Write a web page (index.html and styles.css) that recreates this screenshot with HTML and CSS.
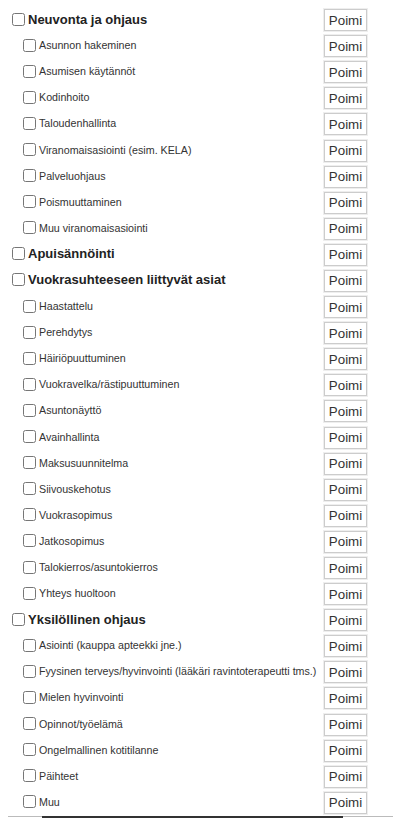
FILE: index.html
```html
<!DOCTYPE html>
<html lang="fi">
<head>
    <meta charset="UTF-8">
    <meta name="viewport" content="width=device-width, initial-scale=1.0">
    <title>Toimenpiteet</title>
    <link rel="stylesheet" href="styles.css">
</head>
<body>
    <div class="lista">
        <div class="rivi paa"><label><input type="checkbox">Neuvonta ja ohjaus</label><button>Poimi</button></div>
        <div class="rivi ala"><label><input type="checkbox">Asunnon hakeminen</label><button>Poimi</button></div>
        <div class="rivi ala"><label><input type="checkbox">Asumisen käytännöt</label><button>Poimi</button></div>
        <div class="rivi ala"><label><input type="checkbox">Kodinhoito</label><button>Poimi</button></div>
        <div class="rivi ala"><label><input type="checkbox">Taloudenhallinta</label><button>Poimi</button></div>
        <div class="rivi ala"><label><input type="checkbox">Viranomaisasiointi (esim. KELA)</label><button>Poimi</button></div>
        <div class="rivi ala"><label><input type="checkbox">Palveluohjaus</label><button>Poimi</button></div>
        <div class="rivi ala"><label><input type="checkbox">Poismuuttaminen</label><button>Poimi</button></div>
        <div class="rivi ala"><label><input type="checkbox">Muu viranomaisasiointi</label><button>Poimi</button></div>
        <div class="rivi paa"><label><input type="checkbox">Apuisännöinti</label><button>Poimi</button></div>
        <div class="rivi paa"><label><input type="checkbox">Vuokrasuhteeseen liittyvät asiat</label><button>Poimi</button></div>
        <div class="rivi ala"><label><input type="checkbox">Haastattelu</label><button>Poimi</button></div>
        <div class="rivi ala"><label><input type="checkbox">Perehdytys</label><button>Poimi</button></div>
        <div class="rivi ala"><label><input type="checkbox">Häiriöpuuttuminen</label><button>Poimi</button></div>
        <div class="rivi ala"><label><input type="checkbox">Vuokravelka/rästipuuttuminen</label><button>Poimi</button></div>
        <div class="rivi ala"><label><input type="checkbox">Asuntonäyttö</label><button>Poimi</button></div>
        <div class="rivi ala"><label><input type="checkbox">Avainhallinta</label><button>Poimi</button></div>
        <div class="rivi ala"><label><input type="checkbox">Maksusuunnitelma</label><button>Poimi</button></div>
        <div class="rivi ala"><label><input type="checkbox">Siivouskehotus</label><button>Poimi</button></div>
        <div class="rivi ala"><label><input type="checkbox">Vuokrasopimus</label><button>Poimi</button></div>
        <div class="rivi ala"><label><input type="checkbox">Jatkosopimus</label><button>Poimi</button></div>
        <div class="rivi ala"><label><input type="checkbox">Talokierros/asuntokierros</label><button>Poimi</button></div>
        <div class="rivi ala"><label><input type="checkbox">Yhteys huoltoon</label><button>Poimi</button></div>
        <div class="rivi paa"><label><input type="checkbox">Yksilöllinen ohjaus</label><button>Poimi</button></div>
        <div class="rivi ala"><label><input type="checkbox">Asiointi (kauppa apteekki jne.)</label><button>Poimi</button></div>
        <div class="rivi ala"><label><input type="checkbox">Fyysinen terveys/hyvinvointi (lääkäri ravintoterapeutti tms.)</label><button>Poimi</button></div>
        <div class="rivi ala"><label><input type="checkbox">Mielen hyvinvointi</label><button>Poimi</button></div>
        <div class="rivi ala"><label><input type="checkbox">Opinnot/työelämä</label><button>Poimi</button></div>
        <div class="rivi ala"><label><input type="checkbox">Ongelmallinen kotitilanne</label><button>Poimi</button></div>
        <div class="rivi ala"><label><input type="checkbox">Päihteet</label><button>Poimi</button></div>
        <div class="rivi ala"><label><input type="checkbox">Muu</label><button>Poimi</button></div>
    </div>
    <div class="alaviiva"><div class="tumma"></div></div>
</body>
</html>
```

FILE: styles.css
```css
body{
    margin: 6px 8px 0px 8px;
    font-family: "Liberation Sans", Arial, sans-serif;
    color: #333;
    background: #fff;
}
.lista{
    display: flex;
    flex-direction: column;
}
.rivi{
    height: 26.1px;
    display: flex;
    align-items: center;
    justify-content: space-between;
    width: 359px;
}
.rivi label{
    display: flex;
    align-items: center;
    white-space: nowrap;
}
.rivi input{
    margin: 0px 3px 0px 4px;
    width: 13px;
    height: 13px;
}
.paa label{
    font-size: 13px;
    font-weight: bold;
    color: #222;
}
.ala label{
    font-size: 10.7px;
    padding-left: 11px;
}
.rivi button{
    font-family: "Liberation Sans", Arial, sans-serif;
    font-size: 13.33px;
    color: #333;
    background: #fff;
    border: 1px solid #ccc;
    box-shadow: 0 0 0 1px #eee;
    height: 22px;
    width: 43px;
    padding: 0px;
    margin-top: 2px;
}
.alaviiva{
    margin: 1px -8px 0px -8px;
    border-top: 1px solid #bbb;
    height: 1px;
}
.tumma{
    margin-left: 42px;
    margin-top: -1px;
    width: 301px;
    height: 2px;
    background: #333;
}
```
